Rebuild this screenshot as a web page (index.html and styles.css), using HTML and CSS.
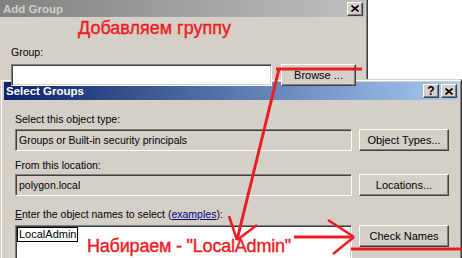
FILE: index.html
```html
<!DOCTYPE html>
<html lang="en">
<head>
  <meta charset="UTF-8" />
  <title>Add Group</title>
  <link rel="stylesheet" href="styles.css">
</head>
<body>
  <div class="add-group">
    <div class="title inactive">
      <span class="title-text">Add Group</span>
      <span class="cap-btn">
        <svg width="8" height="7" viewBox="0 0 8 7"><path d="M0.5 0.5 L7.5 6.5 M7.5 0.5 L0.5 6.5" stroke="#000" stroke-width="1.6"/></svg>
      </span>
    </div>
    <div class="add-body">
      <div class="label">Group:</div>
      <div class="add-row">
        <div class="field white wide"></div>
        <div class="btn browse">Browse ...</div>
      </div>
    </div>
  </div>

  <div class="select-groups">
    <div class="title active">
      <span class="title-text">Select Groups</span>
      <span class="cap-btns">
        <span class="cap-btn q">?</span>
        <span class="cap-btn">
          <svg width="8" height="7" viewBox="0 0 8 7"><path d="M0.5 0.5 L7.5 6.5 M7.5 0.5 L0.5 6.5" stroke="#000" stroke-width="1.6"/></svg>
        </span>
      </span>
    </div>
    <div class="sel-body">
      <div class="label l1">Select this object type:</div>
      <div class="sel-row">
        <div class="field">Groups or Built-in security principals</div>
        <div class="btn">Object Types...</div>
      </div>
      <div class="label l2">From this location:</div>
      <div class="sel-row">
        <div class="field">polygon.local</div>
        <div class="btn">Locations...</div>
      </div>
      <div class="label l3"><u>E</u>nter the object names to select (<a class="link">examples</a>):</div>
      <div class="sel-row last">
        <div class="field white tall"><span class="typed">LocalAdmin</span></div>
        <div class="btn">Check Names</div>
      </div>
    </div>
  </div>

  <div class="note note-top">Добавляем группу</div>
  <div class="note note-bottom">Набираем - "LocalAdmin"</div>

  <svg class="marks" width="462" height="258" viewBox="0 0 462 258">
    <g stroke="#ed1c24" stroke-width="3" fill="none">
      <line x1="276" y1="69" x2="362" y2="69"/>
      <line x1="279" y1="69" x2="237" y2="240"/>
      <line x1="294" y1="237" x2="352" y2="237"/>
      <line x1="351" y1="249" x2="462" y2="249"/>
    </g>
    <g stroke="#ed1c24" stroke-width="2.5" fill="none">
      <line x1="229" y1="216" x2="237" y2="240"/>
      <line x1="257" y1="225" x2="237" y2="240"/>
      <line x1="328" y1="220" x2="354" y2="237"/>
      <line x1="354" y1="237" x2="333" y2="254"/>
    </g>
  </svg>
</body>
</html>
```

FILE: styles.css
```css
* {
  box-sizing: border-box;
  margin: 0;
  padding: 0;
}
body {
  width: 462px;
  height: 258px;
  overflow: hidden;
  position: relative;
  background: #fff;
  font-family: 'Liberation Sans', Arial, sans-serif;
  font-size: 10.5px;
  color: #000;
}
.add-group {
  width: 368px;
  height: 79px;
  background: #d4d0c8;
  border-right: 1px solid #404040;
  box-shadow: inset -1px 0 #808080;
  padding-right: 2px;
}
.title {
  display: flex;
  align-items: center;
  justify-content: space-between;
  height: 17px;
  padding: 0 2px 0 3px;
}
.title-text {
  font-weight: bold;
  font-size: 11.5px;
}
.title.inactive {
  background: linear-gradient(to right, #808080, #c0c0c0);
  color: #d4d0c8;
}
.title.active {
  height: 18px;
  padding: 0 1px 0 2px;
  background: linear-gradient(to right, #0a246a, #a6caf0);
  color: #fff;
}
.cap-btns {
  display: flex;
  gap: 2px;
}
.cap-btn {
  width: 16px;
  height: 14px;
  display: flex;
  align-items: center;
  justify-content: center;
  background: #d4d0c8;
  border-top: 1px solid #fff;
  border-left: 1px solid #fff;
  border-right: 1px solid #404040;
  border-bottom: 1px solid #404040;
  box-shadow: inset -1px -1px #808080;
}
.cap-btn.q {
  font-weight: bold;
  font-size: 12px;
  color: #000;
  line-height: 1;
}
.add-body {
  padding: 29px 0 0 11px;
}
.label {
  height: 13px;
  line-height: 13px;
  white-space: nowrap;
}
.add-body .label {
  margin-bottom: 5px;
}
.add-row {
  display: flex;
  gap: 9px;
}
.field {
  height: 22px;
  background: #d4d0c8;
  border-top: 1px solid #808080;
  border-left: 1px solid #808080;
  border-right: 1px solid #fff;
  border-bottom: 1px solid #fff;
  box-shadow: inset 1px 1px #404040, inset -1px -1px #d4d0c8;
  padding: 4px 0 0 3px;
  line-height: 13px;
  white-space: nowrap;
}
.field.white {
  background: #fff;
}
.field.wide {
  width: 261px;
}
.field.tall {
  height: 40px;
  padding: 1px 0 0 1px;
}
.typed {
  display: inline-block;
  border: 1px solid #000;
  padding: 0 1px;
  line-height: 13px;
  font-size: 11px;
}
.btn {
  height: 22px;
  background: #d4d0c8;
  border-top: 1px solid #fff;
  border-left: 1px solid #fff;
  border-right: 1px solid #404040;
  border-bottom: 1px solid #404040;
  box-shadow: inset -1px -1px #808080;
  display: flex;
  align-items: center;
  justify-content: center;
  white-space: nowrap;
  font-size: 11px;
}
.btn.browse {
  width: 75px;
}
.select-groups {
  height: 179px;
  background: #d4d0c8;
  border-top: 1px solid #d4d0c8;
  border-left: 1px solid #d4d0c8;
  border-right: 1px solid #404040;
  padding: 2px 3px 0 3px;
  box-shadow: inset 1px 1px #fff, inset -1px 0 #808080;
}
.sel-body {
  padding-left: 11px;
}
.sel-row {
  display: grid;
  grid-template-columns: 337px 90px;
  gap: 7px;
}
.l1 {
  margin: 13px 0 3px;
}
.l2 {
  margin: 8px 0 2px;
}
.l3 {
  margin: 12px 0 4px;
}
.link {
  color: #000080;
  text-decoration: underline;
}
.note {
  position: absolute;
  color: #ed1c24;
  font-family: 'Liberation Sans', Arial, sans-serif;
  font-size: 18px;
  white-space: nowrap;
  -webkit-text-stroke: 0.4px #ed1c24;
}
.note-top {
  left: 78px;
  top: 18px;
}
.note-bottom {
  left: 87px;
  top: 236px;
  letter-spacing: -0.2px;
}
.marks {
  position: absolute;
  left: 0;
  top: 0;
  pointer-events: none;
}
```
